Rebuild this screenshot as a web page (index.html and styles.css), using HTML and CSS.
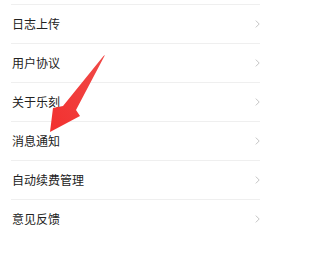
FILE: index.html
```html
<!DOCTYPE html>
<html lang="zh-CN">
<head>
<meta charset="utf-8">
<link rel="stylesheet" href="styles.css">
</head>
<body>
<div class="page">
  <ul class="menu">
    <li class="item"><span class="label">日志上传</span><svg class="chev" viewBox="0 0 5 8" width="5" height="8"><path d="M0.8 0.6 L4.2 4 L0.8 7.4" /></svg></li>
    <li class="item"><span class="label">用户协议</span><svg class="chev" viewBox="0 0 5 8" width="5" height="8"><path d="M0.8 0.6 L4.2 4 L0.8 7.4" /></svg></li>
    <li class="item"><span class="label">关于乐刻</span><svg class="chev" viewBox="0 0 5 8" width="5" height="8"><path d="M0.8 0.6 L4.2 4 L0.8 7.4" /></svg></li>
    <li class="item"><span class="label">消息通知</span><svg class="chev" viewBox="0 0 5 8" width="5" height="8"><path d="M0.8 0.6 L4.2 4 L0.8 7.4" /></svg></li>
    <li class="item"><span class="label">自动续费管理</span><svg class="chev" viewBox="0 0 5 8" width="5" height="8"><path d="M0.8 0.6 L4.2 4 L0.8 7.4" /></svg></li>
    <li class="item"><span class="label">意见反馈</span><svg class="chev" viewBox="0 0 5 8" width="5" height="8"><path d="M0.8 0.6 L4.2 4 L0.8 7.4" /></svg></li>
  </ul>
  <svg class="arrow" viewBox="0 0 272 279" width="272" height="279">
    <defs>
      <linearGradient id="ag" x1="1" y1="0" x2="0" y2="1">
        <stop offset="0" stop-color="#f04a48"/>
        <stop offset="1" stop-color="#f2302f"/>
      </linearGradient>
    </defs>
    <polygon fill="url(#ag)" points="105,55 76,110 80,116 50,132 53,108 63,106 103.5,56"/>
  </svg>
</div>
</body>
</html>
```

FILE: styles.css
```css
html, body {
  margin: 0;
  padding: 0;
  background: #ffffff;
}

.page {
  position: relative;
  width: 272px;
  height: 279px;
  overflow: hidden;
  background: #ffffff;
  font-family: "Noto Sans CJK SC", "Noto Sans", sans-serif;
}

.menu {
  list-style: none;
  margin: 0;
  padding: 4px 12px 0 11px;
}

.item {
  display: flex;
  align-items: center;
  justify-content: space-between;
  height: 38px;
  border-top: 1px solid #efefef;
}

.label {
  font-size: 12px;
  line-height: 16px;
  color: #222222;
  padding-left: 1px;
}

.chev {
  display: block;
  fill: none;
  stroke: #bdbdbd;
  stroke-width: 0.9;
  margin-right: 0;
}

.arrow {
  position: absolute;
  left: 0;
  top: 0;
}
```
